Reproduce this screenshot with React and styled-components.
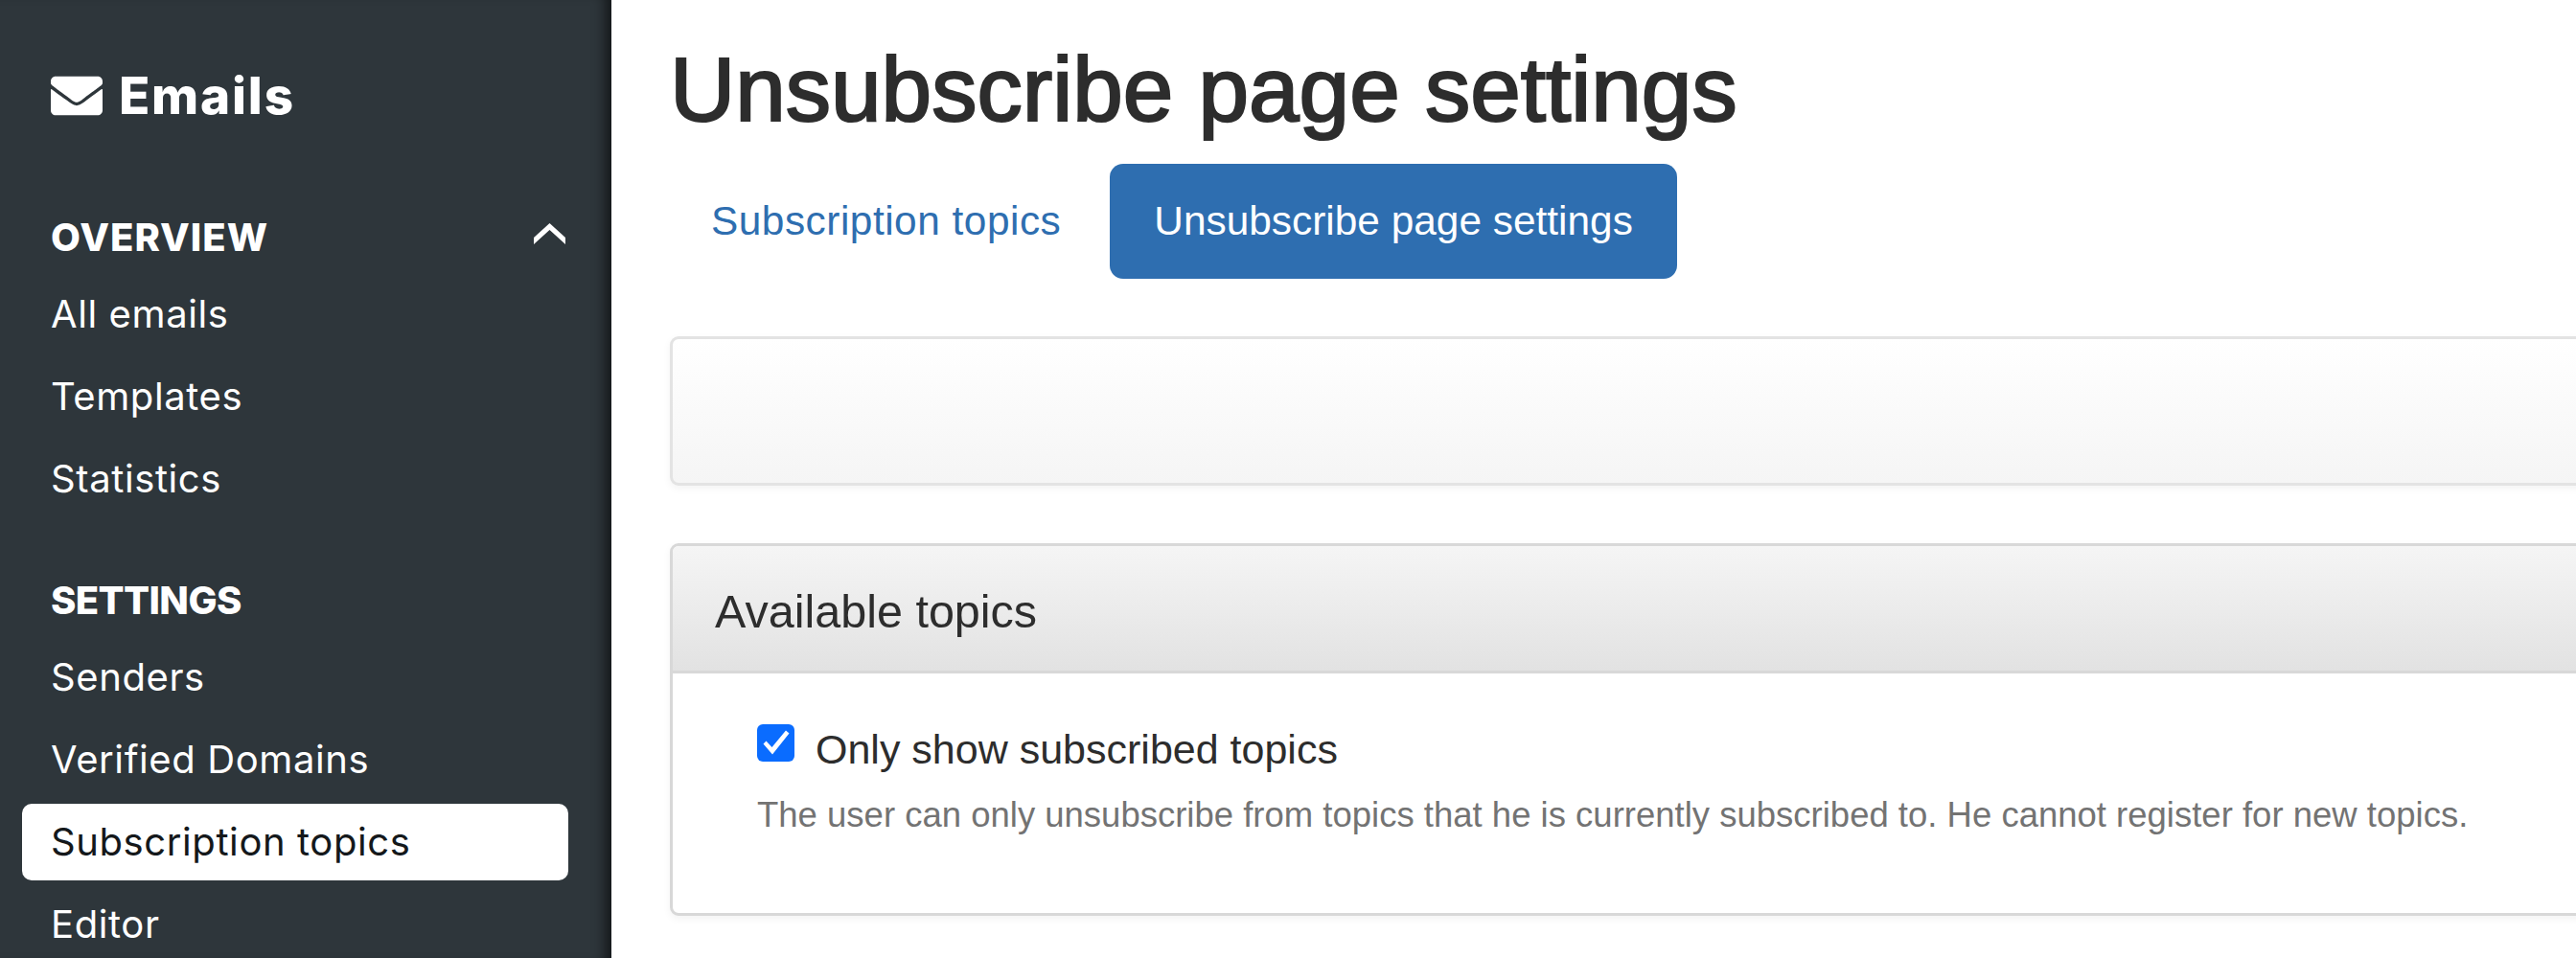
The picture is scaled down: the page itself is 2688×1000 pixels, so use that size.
import React from 'react';
import styled, { createGlobalStyle } from 'styled-components';
import { FaEnvelope } from 'react-icons/fa';

const GlobalStyle = createGlobalStyle`
  html, body {
    margin: 0;
    padding: 0;
    background: #fff;
    overflow: hidden;
  }
  * {
    box-sizing: border-box;
  }
`;

const overview = ['All emails', 'Templates', 'Statistics'];
const settings = ['Senders', 'Verified Domains', 'Subscription topics', 'Editor'];

const App = () => (
  <Page>
    <GlobalStyle />
    <Sidebar>
      <Brand>
        <FaEnvelope size={54} />
        <BrandName>Emails</BrandName>
      </Brand>
      <Section>
        <SectionHead $tracking="1px">
          OVERVIEW
          <Chevron viewBox="0 0 33 23">
            <path d="M0 15 L16.5 0 L33 15 V22 L16.5 7 L0 22 Z" fill="#fff" />
          </Chevron>
        </SectionHead>
        {overview.map((name) => (
          <NavItem key={name}>{name}</NavItem>
        ))}
      </Section>
      <Section>
        <SectionHead $tracking="-0.6px">SETTINGS</SectionHead>
        {settings.map((name) => (
          <NavItem key={name} $active={name === 'Subscription topics'}>
            {name}
          </NavItem>
        ))}
      </Section>
    </Sidebar>
    <Main>
      <Title>Unsubscribe page settings</Title>
      <Tabs>
        <Tab>Subscription topics</Tab>
        <Tab $active>Unsubscribe page settings</Tab>
      </Tabs>
      <EmptyPanel />
      <Panel>
        <PanelHeader>Available topics</PanelHeader>
        <PanelBody>
          <CheckRow>
            <CheckBox>
              <svg viewBox="0 0 39 39" width="39" height="39">
                <path d="M6.5 20.5 L9.5 17.5 L15.5 24 L30 6.5 L33.5 9.5 L16 31.5 Z" fill="#fff" />
              </svg>
            </CheckBox>
            <CheckLabel>Only show subscribed topics</CheckLabel>
          </CheckRow>
          <HelpText>
            The user can only unsubscribe from topics that he is currently subscribed to. He cannot
            register for new topics.
          </HelpText>
        </PanelBody>
      </Panel>
    </Main>
  </Page>
);

export default App;

const Page = styled.div`
  display: flex;
  width: 2688px;
  height: 1000px;
  overflow: hidden;
`;

const Sidebar = styled.aside`
  flex: 0 0 638px;
  height: 1000px;
  padding: 0 45px 0 23px;
  background: #2e363b;
  box-shadow: inset -16px 0 14px -10px rgba(0, 0, 0, 0.6);
  color: #fff;
  font-family: Inter, 'Liberation Sans', sans-serif;
  overflow: hidden;
`;

const Brand = styled.div`
  display: flex;
  align-items: center;
  gap: 17px;
  height: 60px;
  margin: 70px 0 0 30px;
`;

const BrandName = styled.span`
  font-size: 53px;
  font-weight: 800;
  line-height: 60px;
  letter-spacing: 1.8px;
`;

const Section = styled.section`
  display: flex;
  flex-direction: column;
  gap: 6px;
  margin-top: 56px;
  &:first-of-type {
    margin-top: 87px;
  }
`;

const SectionHead = styled.div`
  display: flex;
  align-items: center;
  justify-content: space-between;
  height: 60px;
  padding: 0 3px 0 30px;
  margin-bottom: 5px;
  font-size: 40px;
  font-weight: 800;
  letter-spacing: ${(p) => p.$tracking || '0'};
`;

const Chevron = styled.svg`
  width: 33px;
  height: 23px;
  margin-bottom: 6px;
`;

const NavItem = styled.div`
  display: flex;
  align-items: center;
  height: 80px;
  padding: 0 0 2px 30px;
  border-radius: 10px;
  font-size: 40px;
  font-weight: 400;
  letter-spacing: 0.6px;
  background: ${(p) => (p.$active ? '#fff' : 'transparent')};
  color: ${(p) => (p.$active ? '#14181b' : '#fff')};
`;

const Main = styled.main`
  flex: 1;
  min-width: 0;
  padding: 43px 0 0 61px;
  font-family: 'Liberation Sans', Arial, sans-serif;
  color: #2d2d2d;
`;

const Title = styled.h1`
  margin: 0;
  font-size: 94.5px;
  line-height: 100px;
  font-weight: 400;
  white-space: nowrap;
  -webkit-text-stroke: 2.2px #2d2d2d;
`;

const Tabs = styled.nav`
  display: flex;
  gap: 4px;
  margin: 28px 0 0 -4px;
`;

const Tab = styled.a`
  display: flex;
  align-items: center;
  height: 120px;
  padding: 0 ${(p) => (p.$active ? '46px' : '47px')};
  border-radius: 14px;
  font-size: 42.4px;
  white-space: nowrap;
  letter-spacing: ${(p) => (p.$active ? '0' : '0.5px')};
  background: ${(p) => (p.$active ? '#2e6eb0' : 'transparent')};
  color: ${(p) => (p.$active ? '#fff' : '#2e6eb0')};
`;

const EmptyPanel = styled.div`
  height: 156px;
  margin: 60px -24px 0 0;
  border: 3px solid #e3e3e3;
  border-radius: 9px;
  background: linear-gradient(to bottom, #fff, #f5f5f5);
  box-shadow: 0 3px 8px rgba(0, 0, 0, 0.05);
`;

const Panel = styled.section`
  height: 389px;
  margin: 60px -24px 0 0;
  border: 3px solid #d8d8d8;
  border-radius: 9px;
  background: #fff;
  box-shadow: 0 3px 8px rgba(0, 0, 0, 0.05);
  overflow: hidden;
`;

const PanelHeader = styled.h3`
  display: flex;
  align-items: center;
  height: 133px;
  margin: 0;
  padding: 7px 0 0 44px;
  border-bottom: 3px solid #d8d8d8;
  background: linear-gradient(to bottom, #f5f5f5, #e2e2e2);
  font-size: 48.5px;
  font-weight: 400;
  line-height: 1;
`;

const PanelBody = styled.div`
  padding: 53px 0 0 88px;
`;

const CheckRow = styled.label`
  display: flex;
  align-items: flex-start;
  gap: 22px;
`;

const CheckBox = styled.span`
  flex: 0 0 39px;
  height: 39px;
  border-radius: 6px;
  background: #0a6cff;
`;

const CheckLabel = styled.span`
  margin-top: 2px;
  font-size: 43px;
  line-height: 48px;
  white-space: nowrap;
`;

const HelpText = styled.p`
  margin: 22px 0 0;
  font-size: 36.5px;
  line-height: 46px;
  color: #737373;
  white-space: nowrap;
`;
